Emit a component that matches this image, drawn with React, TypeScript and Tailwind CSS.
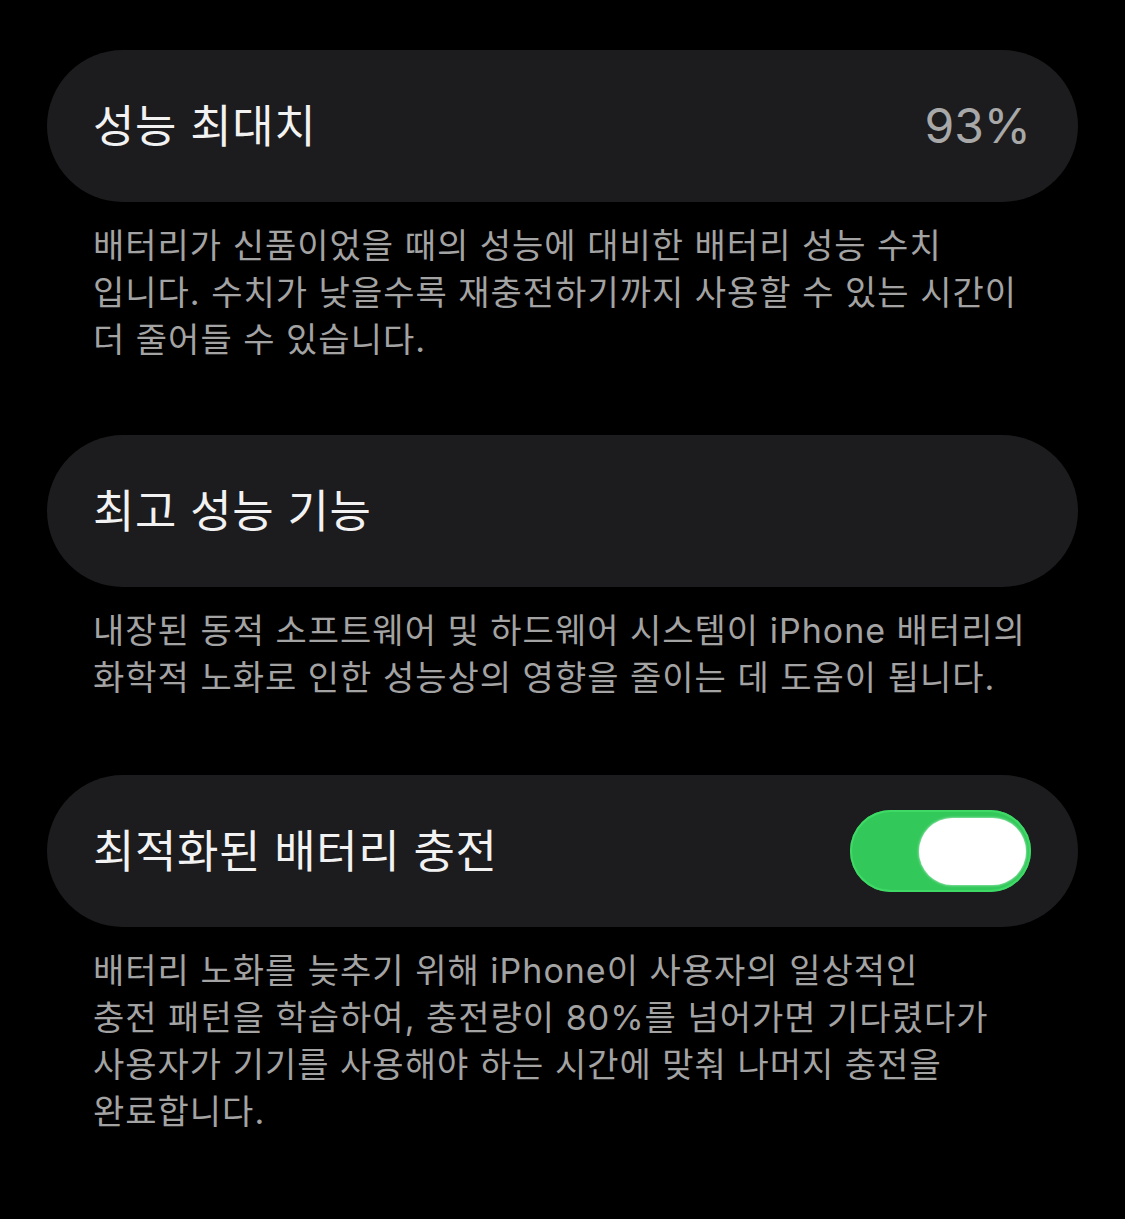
import React from 'react';

const font = { fontFamily: 'Inter, "Noto Sans CJK KR", sans-serif' };

function Row({ title, right }: { title: string; right?: React.ReactNode }) {
  return (
    <div className="h-[152px] rounded-full bg-[#1c1c1e] flex items-center justify-between pl-[46px] pr-[47px]">
      <span className="text-[45px] tracking-[0.6px] text-[#f2f2f2] whitespace-nowrap leading-none">{title}</span>
      {right}
    </div>
  );
}

function Note({ lines }: { lines: string[] }) {
  return (
    <div className="pl-[46px] pt-[20px] text-[34px] tracking-[1px] leading-[47px] text-[#a3a3a3]">
      {lines.map((l, i) => (
        <div key={i} className="whitespace-nowrap">
          {l}
        </div>
      ))}
    </div>
  );
}

function Toggle() {
  return (
    <div className="w-[181px] h-[82px] rounded-full bg-[#32c85a] flex items-center justify-end pr-[5px] shadow-[inset_0_0_0_2px_#3fd966]">
      <div className="w-[107px] h-[67px] rounded-full bg-white shadow-[0_0_3px_rgba(255,255,255,0.8)]" />
    </div>
  );
}

export default function App() {
  return (
    <div className="min-h-[1219px] w-full bg-black px-[47px] pt-[50px]" style={font}>
      <Row title="성능 최대치" right={<span className="text-[48px] text-[#a8a8a8] leading-none">93%</span>} />
      <Note
        lines={[
          '배터리가 신품이었을 때의 성능에 대비한 배터리 성능 수치',
          '입니다. 수치가 낮을수록 재충전하기까지 사용할 수 있는 시간이',
          '더 줄어들 수 있습니다.',
        ]}
      />

      <div className="mt-[72px]">
        <Row title="최고 성능 기능" />
      </div>
      <Note
        lines={[
          '내장된 동적 소프트웨어 및 하드웨어 시스템이 iPhone 배터리의',
          '화학적 노화로 인한 성능상의 영향을 줄이는 데 도움이 됩니다.',
        ]}
      />

      <div className="mt-[74px]">
        <Row title="최적화된 배터리 충전" right={<Toggle />} />
      </div>
      <Note
        lines={[
          '배터리 노화를 늦추기 위해 iPhone이 사용자의 일상적인',
          '충전 패턴을 학습하여, 충전량이 80%를 넘어가면 기다렸다가',
          '사용자가 기기를 사용해야 하는 시간에 맞춰 나머지 충전을',
          '완료합니다.',
        ]}
      />
    </div>
  );
}
